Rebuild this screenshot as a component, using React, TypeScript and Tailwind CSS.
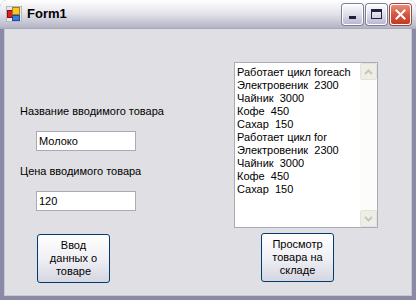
const items = [
  'Работает цикл foreach',
  'Электровеник  2300',
  'Чайник  3000',
  'Кофе  450',
  'Сахар  150',
  'Работает цикл for',
  'Электровеник  2300',
  'Чайник  3000',
  'Кофе  450',
  'Сахар  150',
];

function FormIcon() {
  return (
    <svg width="16" height="16" viewBox="0 0 16 16">
      <rect x="0.5" y="0.5" width="15" height="15" fill="#e8e8ee" stroke="#b8b8c4" />
      <rect x="1.5" y="4.5" width="5" height="7" fill="#d8241c" stroke="#8a1010" />
      <rect x="6.5" y="1.5" width="7" height="7" fill="#f8c828" stroke="#b07a10" />
      <rect x="6.5" y="9.5" width="7" height="5" fill="#3c7ee0" stroke="#1c4c9c" />
    </svg>
  );
}

function TitleButton({ kind }: { kind: 'min' | 'max' | 'close' }) {
  if (kind === 'close') {
    return (
      <div className="w-[21px] h-[21px] rounded-[3px] border border-white bg-gradient-to-b from-[#e98c78] via-[#d5553f] to-[#c23a22] flex items-center justify-center shadow-[0_0_0_1px_#9c4a40]">
        <svg width="11" height="11" viewBox="0 0 11 11">
          <path d="M1.5 1.5 L9.5 9.5 M9.5 1.5 L1.5 9.5" stroke="#fff" strokeWidth="2" strokeLinecap="square" />
        </svg>
      </div>
    );
  }
  return (
    <div className="w-[21px] h-[21px] rounded-[3px] border border-white bg-gradient-to-b from-[#fbfbfd] via-[#dedeea] to-[#b9b9cf] flex items-center justify-center shadow-[0_0_0_1px_#7d7d99]">
      {kind === 'min' ? (
        <div className="w-[7px] h-[3px] bg-[#202040] mt-[7px]" />
      ) : (
        <div className="w-[11px] h-[10px] border border-[#202040] border-t-[3px]" />
      )}
    </div>
  );
}

function XpButton({ lines }: { lines: string[] }) {
  return (
    <div className="w-[73px] h-[49px] rounded-[3px] border border-[#003c74] bg-gradient-to-b from-white via-[#f0f0f5] to-[#d6d6e2] flex flex-col items-center justify-center text-black">
      {lines.map((l, i) => (
        <div key={i} className="leading-[13px]">{l}</div>
      ))}
    </div>
  );
}

export default function App() {
  return (
    <div className="w-[416px] h-[300px] bg-white text-[11px] font-['Liberation_Sans',sans-serif]">
      <div className="w-[416px] h-[300px] flex flex-col rounded-t-[7px] overflow-hidden bg-[#8a8aa6]">
        {/* title bar */}
        <div className="h-[29px] flex items-center pl-[6px] pr-[5px] bg-gradient-to-b from-[#ffffff] via-[#e2e2ea] to-[#b4b4c6] border-b border-[#a8a8bc]">
          <FormIcon />
          <span className="ml-[5px] text-[13px] font-bold text-black">Form1</span>
          <div className="ml-auto flex gap-[3px]">
            <TitleButton kind="min" />
            <TitleButton kind="max" />
            <TitleButton kind="close" />
          </div>
        </div>
        {/* client area */}
        <div className="flex-1 mx-[4px] mb-[4px] bg-[#e0dfe3] flex border-l border-r border-b border-[#c8c8d4]">
          <div className="w-[229px] pl-[15px] flex flex-col">
            <div className="mt-[76px] leading-[13px]">Название вводимого товара</div>
            <div className="mt-[13px] ml-[16px] w-[100px] h-[20px] bg-white border border-[#a5acb5] flex items-center px-[2px]">Молоко</div>
            <div className="mt-[14px] leading-[13px]">Цена вводимого товара</div>
            <div className="mt-[13px] ml-[16px] w-[100px] h-[20px] bg-white border border-[#a5acb5] flex items-center px-[2px]">120</div>
            <div className="mt-[23px] ml-[17px]">
              <XpButton lines={['Ввод', 'данных о', 'товаре']} />
            </div>
          </div>
          <div className="flex flex-col">
            <div className="mt-[33px] w-[144px] h-[166px] bg-white border border-[#a5acb5] flex">
              <div className="flex-1 min-w-0 overflow-hidden pl-[2px] pt-[3px]">
                {items.map((t, i) => (
                  <div key={i} className="leading-[13px] whitespace-pre">{t}</div>
                ))}
              </div>
              <div className="w-[17px] flex flex-col bg-[#fcfcfb]">
                <div className="h-[17px] rounded-[2px] border border-[#e3e2dc] bg-[#eeede6] flex items-center justify-center">
                  <svg width="9" height="6" viewBox="0 0 9 6"><path d="M1 5 L4.5 1.5 L8 5" stroke="#c9c7b8" strokeWidth="2" fill="none" /></svg>
                </div>
                <div className="flex-1" />
                <div className="h-[17px] rounded-[2px] border border-[#e3e2dc] bg-[#eeede6] flex items-center justify-center">
                  <svg width="9" height="6" viewBox="0 0 9 6"><path d="M1 1 L4.5 4.5 L8 1" stroke="#c9c7b8" strokeWidth="2" fill="none" /></svg>
                </div>
              </div>
            </div>
            <div className="mt-[5px] ml-[27px]">
              <XpButton lines={['Просмотр', 'товара на', 'складе']} />
            </div>
          </div>
        </div>
      </div>
    </div>
  );
}
